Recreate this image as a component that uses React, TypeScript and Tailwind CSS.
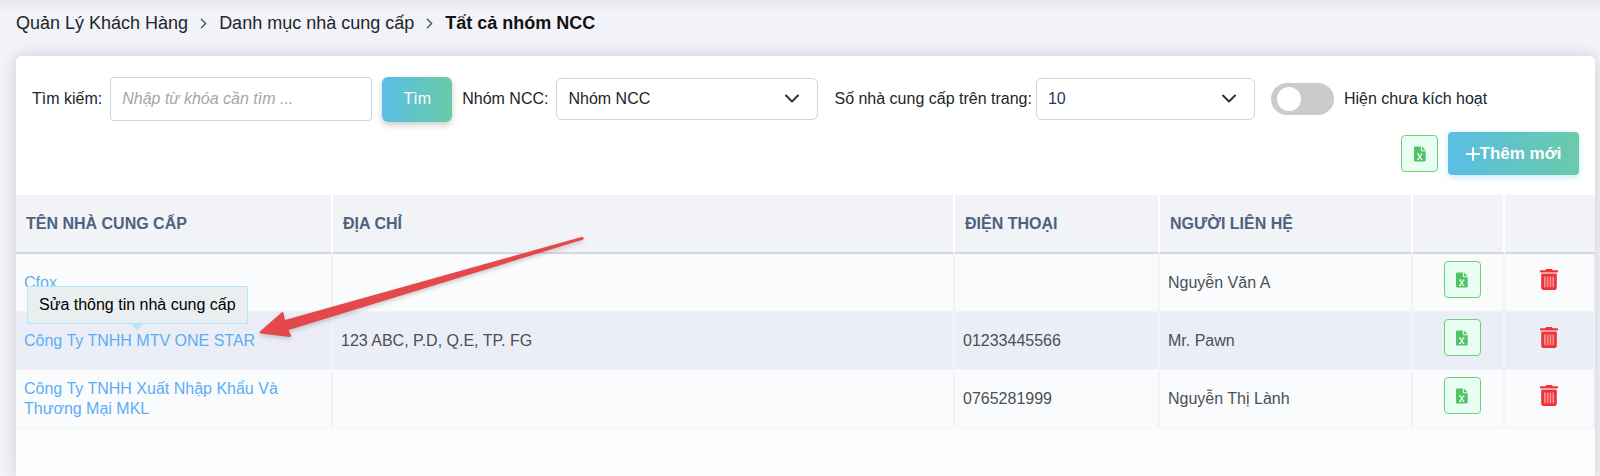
import React from 'react';
import { ChevronRight } from 'lucide-react';

interface Supplier {
  id: number;
  name: string;
  address: string;
  phone: string;
  contact: string;
  tooltip?: string;
}

const SUPPLIERS: Supplier[] = [
  { id: 1, name: 'Cfox', address: '', phone: '', contact: 'Nguyễn Văn A' },
  {
    id: 2,
    name: 'Công Ty TNHH MTV ONE STAR',
    address: '123 ABC, P.D, Q.E, TP. FG',
    phone: '01233445566',
    contact: 'Mr. Pawn',
    tooltip: 'Sửa thông tin nhà cung cấp',
  },
  { id: 3, name: 'Công Ty TNHH Xuất Nhập Khẩu Và Thương Mại MKL', address: '', phone: '0765281999', contact: 'Nguyễn Thị Lành' },
];

const HEADERS = ['TÊN NHÀ CUNG CẤP', 'ĐỊA CHỈ', 'ĐIỆN THOẠI', 'NGƯỜI LIÊN HỆ', '', ''];

const ExcelButton: React.FC = () => (
  <button
    type="button"
    aria-label="Xuất Excel"
    className="inline-flex h-[37px] w-[37px] items-center justify-center rounded border border-[#6fcf7f] bg-[#e9fef2] align-middle text-[#52c265]"
  >
    <svg width="12" height="16" viewBox="0 0 12 16">
      <path fill="currentColor" d="M1.200 .5H6.800V4.200q0 1.100 1.100 1.100H11.700V14.300q0 1.200-1.200 1.200H1.200Q0 15.500 0 14.300V1.700Q0 .5 1.200 .5Z" />
      <path fill="currentColor" d="M7.900 .6 11.600 4.300H7.900Z" />
      <path d="M3.900 8 7.700 13.500M7.700 8 3.900 13.500M3.200 8H5M6.700 8H8.400M3.200 13.500H5M6.700 13.500H8.400" stroke="#fff" strokeWidth="1.100" fill="none" />
    </svg>
  </button>
);

const TrashIcon: React.FC = () => (
  <svg width="18" height="21" viewBox="0 0 18 21" className="text-[#ee3338]">
    <path fill="currentColor" d="M.6 1.300H5.300L6.200 .1h5.600l.9 1.200h4.700q.6 0 .6.6v.9q0 .6-.6.6H.6Q0 3.400 0 2.800v-.9q0-.6.600-.6Z" />
    <path fill="#f7a3a6" d="M1.500 3.400h15v1.700h-15z" />
    <path fill="currentColor" d="M1.200 5.100h15.600v14q0 1.800-1.800 1.800H3q-1.800 0-1.800-1.800Z" />
    <path fill="#f58f93" d="M4 7.500h1.700v10.800H4zM6.800 7.500h1.700v10.800H6.800zM9.600 7.500h1.700v10.800H9.600zM12.400 7.500h1.700v10.800h-1.700z" />
  </svg>
);

const SelectBox: React.FC<{ id: string; value: string; className: string }> = ({ id, value, className }) => (
  <div className="relative">
    <select
      id={id}
      defaultValue={value}
      className={`block h-[42px] appearance-none rounded-md border border-[#ced4dc] bg-white pr-10 pl-[11px] ${className}`}
    >
      <option value={value}>{value}</option>
    </select>
    <svg width="16" height="10" viewBox="0 0 16 10" className="pointer-events-none absolute top-4 right-[18px]">
      <path d="M2 1.500 8 7.500 14 1.500" fill="none" stroke="#2d3338" strokeWidth="2" strokeLinecap="round" strokeLinejoin="round" />
    </svg>
  </div>
);

const App: React.FC = () => {
  return (
    <div className="flex min-h-screen flex-col bg-[#f2f3f8] bg-linear-to-b from-[#e8e9ee] to-[#f2f3f8] to-[12px] pr-[5px] pl-4 font-['Liberation_Sans',Arial,sans-serif] text-base text-[#212529]">
      {/* Breadcrumb */}
      <nav className="flex h-14 items-center gap-[7px] pb-2.5 text-lg">
        <a href="#customers">Quản Lý Khách Hàng</a>
        <ChevronRight size={17} className="text-[#4a5568]" />
        <a href="#suppliers">Danh mục nhà cung cấp</a>
        <ChevronRight size={17} className="text-[#4a5568]" />
        <span className="font-bold text-[#111]">Tất cả nhóm NCC</span>
      </nav>

      <main className="flex grow flex-col rounded-t-md bg-[#fcfcfc] shadow-[0_0_14px_rgba(70,75,100,0.22)]">
        {/* Filters */}
        <section className="flex flex-col rounded-t-md bg-white px-4 pt-[19px] pb-5">
          <div className="flex h-12 items-center">
            <label htmlFor="keyword" className="mr-2">Tìm kiếm:</label>
            <input
              id="keyword"
              type="text"
              placeholder="Nhập từ khóa cần tìm ..."
              className="h-11 w-[262px] rounded border border-[#ced4dc] bg-white px-[11px] placeholder:text-[#a6a6a6] placeholder:italic"
            />
            <button type="button" className="ml-2.5 h-[45px] w-[70px] rounded-md bg-linear-to-r from-[#5abde4] to-[#6acaa8] text-white shadow-[0_3px_6px_rgba(0,0,0,0.2)]">
              Tìm
            </button>
            <label htmlFor="group" className="mr-2 ml-2.5">Nhóm NCC:</label>
            <SelectBox id="group" value="Nhóm NCC" className="w-[262px]" />
            <label htmlFor="page-size" className="mr-1 ml-4">Số nhà cung cấp trên trang:</label>
            <SelectBox id="page-size" value="10" className="w-[219px] text-[#1f3a63]" />
            <input
              id="inactive"
              type="checkbox"
              role="switch"
              className="ml-4 flex h-8 w-[63px] shrink-0 appearance-none items-center rounded-full bg-[#cbcbcb] px-1.5 before:h-6 before:w-6 before:rounded-full before:bg-white checked:justify-end checked:bg-[#5abde4]"
            />
            <label htmlFor="inactive" className="ml-2.5">Hiện chưa kích hoạt</label>
          </div>
          <div className="mt-[9px] flex items-center justify-end gap-2.5">
            <ExcelButton />
            <button type="button" className="flex h-[43px] w-[131px] items-center justify-center rounded bg-linear-to-r from-[#5abde4] to-[#6acaa8] text-[17px] font-bold text-white shadow-[0_2px_6px_rgba(90,189,228,0.35)]">
              <svg width="14" height="14" viewBox="0 0 14 14">
                <path d="M7 .9v12.200M.9 7h12.200" stroke="currentColor" strokeWidth="1.800" strokeLinecap="round" />
              </svg>
              Thêm mới
            </button>
          </div>
        </section>

        {/* Supplier list */}
        <section className="relative">
          <table className="w-full table-fixed border-separate border-spacing-0">
            <colgroup>
              <col className="w-[317px]" />
              <col />
              <col className="w-[205px]" />
              <col className="w-[253px]" />
              <col className="w-[92px]" />
              <col className="w-[90px]" />
            </colgroup>
            <thead>
              <tr className="h-[59px] text-left text-[#4f6180]">
                {HEADERS.map((title, i) => (
                  <th key={i} className="border-r-2 border-b-2 border-r-white border-b-[#d2d9e4] bg-[#f2f3f7] pl-2.5 font-bold last:border-r-0">
                    {title}
                  </th>
                ))}
              </tr>
            </thead>
            <tbody>
              {SUPPLIERS.map(s => (
                <tr
                  key={s.id}
                  className="h-[58px] bg-[#fafbfd] text-[#495057] even:bg-[#ebeef6] *:border-r-2 *:border-b *:border-[#f2f3f6] *:pl-2"
                >
                  <td className="pr-10">
                    <div className="relative">
                      <a href={`#supplier-${s.id}`} className="block leading-5 text-[#5aaef5]">{s.name}</a>
                      {s.tooltip && (
                        <div role="tooltip" className="absolute bottom-full left-[3px] mb-[7px] border border-[#b3e5fc] bg-[#e9eef0] px-[11px] py-2 leading-5 whitespace-nowrap text-black">
                          {s.tooltip}
                          <svg width="12" height="8" viewBox="0 0 12 8" className="absolute top-full left-1/2 -translate-x-1/2">
                            <path d="M0 0h12L6 8Z" fill="#b3e5fc" />
                          </svg>
                        </div>
                      )}
                    </div>
                  </td>
                  <td>{s.address}</td>
                  <td>{s.phone}</td>
                  <td>{s.contact}</td>
                  <td className="pb-1.5 text-center">
                    <ExcelButton />
                  </td>
                  <td className="pr-2">
                    <button type="button" aria-label="Xóa" className="mx-auto block pb-1.5">
                      <TrashIcon />
                    </button>
                  </td>
                </tr>
              ))}
            </tbody>
          </table>

          {/* Arrow pointing at the supplier link */}
          <svg width="336" height="112" viewBox="0 0 336 112" className="pointer-events-none absolute top-9 left-60 drop-shadow-[0_2px_2px_rgba(0,0,0,0.2)]">
            <path
              d="M4 100.500 25.500 81.500q1.500-1 2 .6l1.500 6.900L325.500 6q2-.3 2.200 1 .2 1.300-1.200 1.800L32.500 99l2.500 5.500q.4 1.700-1.400 1.500L5 102.600q-2-.6-1-2.100Z"
              fill="#e5484a"
            />
          </svg>
        </section>
      </main>
    </div>
  );
};

export default App;
